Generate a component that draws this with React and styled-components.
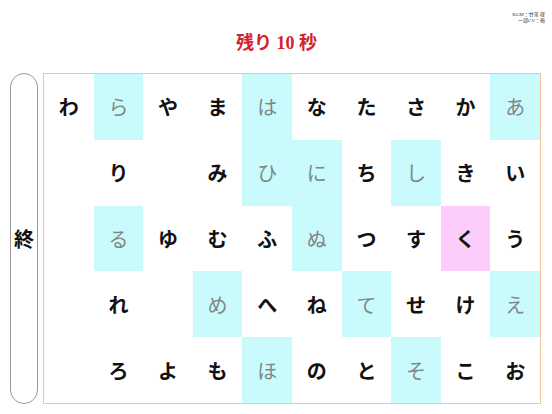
import React from "react";
import styled, { createGlobalStyle } from "styled-components";

const Global = createGlobalStyle`
  html, body { margin: 0; padding: 0; background: #ffffff; }
  body { font-family: "Liberation Serif", "Noto Sans CJK JP", serif; }
`;

const Page = styled.div`
  width: 552px;
  height: 414px;
  display: flex;
  flex-direction: column;
  box-sizing: border-box;
  padding: 12px 7px 0 10px;
`;

const Credits = styled.div`
  align-self: flex-end;
  text-align: right;
  font-size: 5px;
  line-height: 6px;
  color: #333;
  height: 13px;
`;

const Title = styled.h1`
  margin: 0;
  height: 48px;
  box-sizing: border-box;
  padding: 7px 2px 0 0;
  display: flex;
  justify-content: center;
  align-items: flex-start;
  font-size: 18px;
  line-height: 22px;
  font-weight: bold;
  color: #d2232a;
  font-family: "Liberation Serif", "Noto Sans CJK JP", serif;
  white-space: pre;
`;

const Main = styled.div`
  display: flex;
  gap: 5px;
  height: 331px;
`;

const EndButton = styled.button`
  width: 28px;
  height: 100%;
  box-sizing: border-box;
  border: 1px solid #9a9a9a;
  border-radius: 14px;
  background: #fff;
  padding: 0;
  display: flex;
  align-items: center;
  justify-content: center;
  font-size: 20px;
  font-weight: bold;
  color: #111;
  font-family: "Noto Sans CJK JP", serif;
`;

const Board = styled.div`
  width: 498px;
  height: 100%;
  box-sizing: border-box;
  border: 1px solid #f2c596;
  display: grid;
  grid-template-columns: repeat(10, 1fr);
  grid-template-rows: repeat(5, 1fr);
`;

const bg = { cyan: "#c9fbfc", pink: "#fccdfb", none: "transparent" };

const Cell = styled.div`
  display: flex;
  align-items: center;
  justify-content: center;
  background: ${(p) => bg[p.$mark]};
  font-size: 20px;
  font-family: "Noto Sans CJK JP", serif;
  font-weight: ${(p) => (p.$mark === "cyan" ? 400 : 700)};
  color: ${(p) => (p.$mark === "cyan" ? "#7f8787" : "#111")};
`;

const rows = [
  "わ ら* や ま は* な た さ か あ*",
  "_ り _ み ひ* に* ち し* き い",
  "_ る* ゆ む ふ ぬ* つ す く# う",
  "_ れ _ め* へ ね て* せ け え*",
  "_ ろ よ も ほ* の と そ* こ お",
];

const cells = rows.flatMap((r) =>
  r.split(" ").map((t) => {
    if (t === "_") return { ch: "", mark: "none" };
    if (t.endsWith("*")) return { ch: t[0], mark: "cyan" };
    if (t.endsWith("#")) return { ch: t[0], mark: "pink" };
    return { ch: t, mark: "none" };
  })
);

export default function App() {
  return (
    <>
      <Global />
      <Page>
        <Credits>
          BGM：甘茶 様
          <br />
          一部CV：梅
        </Credits>
        <Title>{"残り 10 秒"}</Title>
        <Main>
          <EndButton>終</EndButton>
          <Board>
            {cells.map((c, i) => (
              <Cell key={i} $mark={c.mark}>
                {c.ch}
              </Cell>
            ))}
          </Board>
        </Main>
      </Page>
    </>
  );
}
